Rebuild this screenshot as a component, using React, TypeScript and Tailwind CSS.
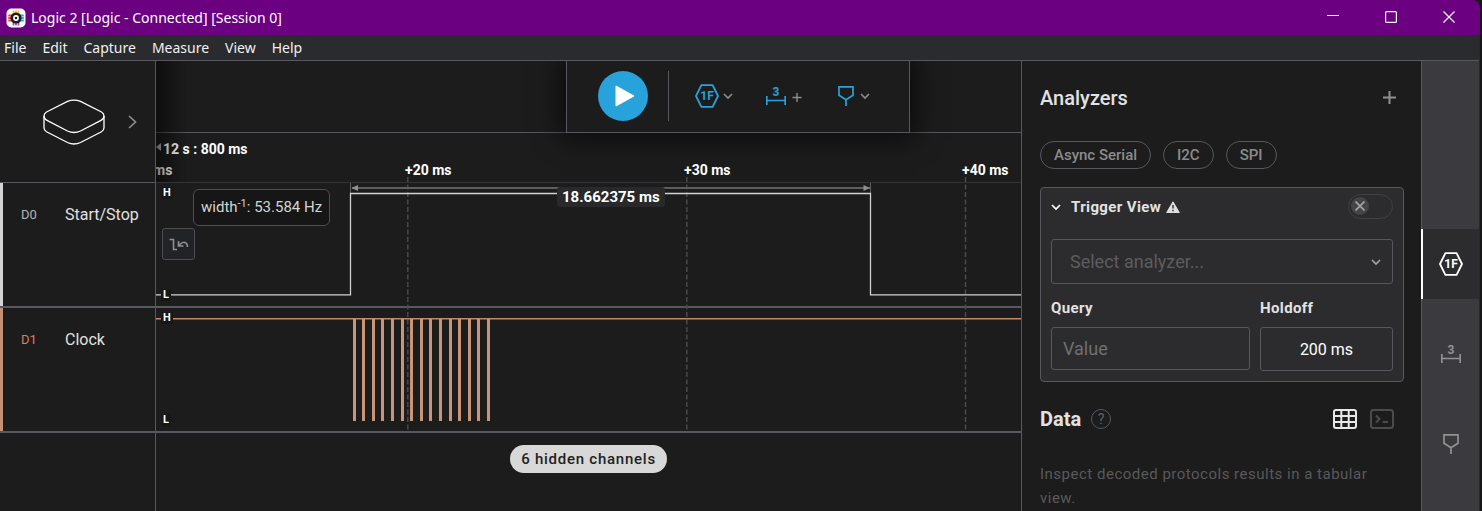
import React, { useState } from 'react';

const menus = ['File', 'Edit', 'Capture', 'Measure', 'View', 'Help'];
const clockPulses = [197, 206, 216, 225, 235, 245, 254, 264, 273, 283, 293, 302, 312, 321, 331];

function Logo() {
  return (
    <svg width="20" height="20" viewBox="0 0 20 20" aria-hidden="true">
      <rect x="0.5" y="0.5" width="19" height="19" rx="5" fill="#fff" />
      <path d="M7.5 2.5v4M12.5 2.5v4M10 2.5v3" stroke="#f5b921" strokeWidth="1.8" />
      <path d="M7.5 13.5v4M10 14.5v3M12.5 13.5v4" stroke="#a24bd0" strokeWidth="1.8" />
      <path d="M2.2 7.5h4M2.2 10h3M2.2 12.5h4" stroke="#e8503a" strokeWidth="1.8" />
      <path d="M13.8 7.5h4M14.8 10h3M13.8 12.5h4" stroke="#2aa8e0" strokeWidth="1.8" />
      <circle cx="10" cy="10" r="5.6" fill="#1d1d1f" />
      <circle cx="10" cy="10" r="2.1" fill="none" stroke="#fff" strokeWidth="1.6" />
    </svg>
  );
}

function HexIcon() {
  return (
    <svg width="24" height="24" viewBox="0 0 24 24" fill="none" aria-hidden="true">
      <path d="M6.4 1.2H17.6L23 12L17.6 22.8H6.4L1 12Z" stroke="currentColor" strokeWidth="1.8" strokeLinejoin="round" />
      <text x="12" y="16.4" textAnchor="middle" fill="currentColor" fontSize="12" fontWeight="700" fontFamily="Roboto, sans-serif">1F</text>
    </svg>
  );
}

function MeasureIcon() {
  return (
    <svg width="20" height="20" viewBox="0 0 20 20" fill="none" aria-hidden="true">
      <path d="M0.8 10v9M19.2 10v9M0.8 14.5H19.2" stroke="currentColor" strokeWidth="1.7" />
      <text x="10" y="10" textAnchor="middle" fill="currentColor" fontSize="12" fontWeight="700" fontFamily="Roboto, sans-serif">3</text>
    </svg>
  );
}

function MarkerIcon() {
  return (
    <svg width="16" height="20" viewBox="0 0 16 20" fill="none" aria-hidden="true">
      <path d="M1 0.9H15V9.2L8 13.8L1 9.2ZM8 13.8V20" stroke="currentColor" strokeWidth="1.7" />
    </svg>
  );
}

function Chevron({ className = '' }: { className?: string }) {
  return (
    <svg width="10" height="7" viewBox="0 0 10 7" fill="none" className={className} aria-hidden="true">
      <path d="M1 1L5 5L9 1" stroke="currentColor" strokeWidth="1.7" />
    </svg>
  );
}

function TitleBar() {
  return (
    <header className="flex h-[35px] items-center rounded-tr-lg bg-[#6b0080] pr-0.5 pl-1.5 text-white">
      <Logo />
      <h1 className="ml-[5px] flex-1 font-['Noto_Sans',sans-serif] text-sm">Logic 2 [Logic - Connected] [Session 0]</h1>
      <button aria-label="Minimize" className="flex h-full w-[58px] items-center justify-center">
        <svg width="12" height="12" viewBox="0 0 12 12"><path d="M0 3.5H12" stroke="#fff" /></svg>
      </button>
      <button aria-label="Maximize" className="flex h-full w-[58px] items-center justify-center pb-0.5">
        <svg width="12" height="12" viewBox="0 0 12 12"><rect x="0.6" y="0.6" width="10.8" height="10.8" rx="1" fill="none" stroke="#fff" strokeWidth="1.2" /></svg>
      </button>
      <button aria-label="Close" className="flex h-full w-[58px] items-center justify-center pb-0.5">
        <svg width="12" height="12" viewBox="0 0 12 12"><path d="M0.5 0.5L11.5 11.5M11.5 0.5L0.5 11.5" stroke="#fff" strokeWidth="1.2" /></svg>
      </button>
    </header>
  );
}

function ChannelLabel({ id, name, tone, bar }: { id: string; name: string; tone: string; bar: string }) {
  return (
    <div className="flex h-[125px] border-b-2 border-[#57575d]">
      <div className={`w-[3px] ${bar}`} />
      <div className="flex h-16 items-center pl-[18px]">
        <span className={`w-11 text-[13px] ${tone}`}>{id}</span>
        <span className="text-base text-[#e0e0e0]">{name}</span>
      </div>
    </div>
  );
}

function Sidebar() {
  return (
    <aside className="w-[156px] shrink-0 border-r border-[#57575d]">
      <div className="flex h-[122px] items-center border-b border-[#57575d] pl-[43px]">
        <svg width="62" height="48" viewBox="0 0 62 48" fill="none" stroke="#fff" strokeWidth="1.3" aria-hidden="true">
          <path d="M3.5 14L24.5 3.3Q31 0.8 37.5 3.3L58.5 14Q61 15.5 61 18Q61 20.8 58 22.3L37.5 33Q31 36 24.5 33L4 22.3Q1 20.8 1 18Q1 15.5 3.5 14Z" />
          <path d="M1 18V29.8Q1 32.2 3.5 33.8L24.5 44.5Q31 47.5 37.5 44.5L58.5 33.8Q61 32.2 61 29.8V18" />
        </svg>
        <button aria-label="Device settings" className="ml-[23px] text-[#8c8c8c]">
          <svg width="9" height="14" viewBox="0 0 9 14" fill="none"><path d="M1 1L7.5 7L1 13" stroke="currentColor" strokeWidth="1.7" /></svg>
        </button>
      </div>
      <ChannelLabel id="D0" name="Start/Stop" tone="text-[#b5b5b5]" bar="bg-[#d4d4d4]" />
      <ChannelLabel id="D1" name="Clock" tone="text-[#dd7c5e]" bar="bg-[#c69076]" />
    </aside>
  );
}

function Toolbar() {
  return (
    <div className="absolute left-[410px] top-0 z-10 flex h-[72px] w-[344px] items-center border-x border-b border-[#57575d] bg-[#1c1c1c] pb-px pl-[31px] shadow-[0_0_24px_6px_rgba(0,0,0,0.6)]">
      <button aria-label="Start capture" className="flex h-[50px] w-[50px] items-center justify-center rounded-full bg-[#27a2da]">
        <svg width="20" height="22" viewBox="0 0 20 22" className="ml-[3px]"><path d="M1 1L19 11L1 21Z" fill="#fff" stroke="#fff" strokeLinejoin="round" /></svg>
      </button>
      <div className="ml-5 h-[50px] w-px bg-[#57575d]" />
      <button aria-label="Add analyzer" className="ml-[26px] flex items-center gap-1 text-[#27a2da]">
        <HexIcon /><Chevron className="text-[#8c8c8c]" />
      </button>
      <button aria-label="Add measurement" className="ml-[33px] flex items-center gap-1.5 text-[#27a2da]">
        <MeasureIcon />
        <svg width="10" height="10" viewBox="0 0 10 10" className="mt-0.5 text-[#8c8c8c]"><path d="M5 1V10M0.5 5.5H9.5" stroke="currentColor" strokeWidth="1.4" /></svg>
      </button>
      <button aria-label="Add marker" className="ml-9 flex items-center gap-1.5 text-[#27a2da]">
        <MarkerIcon /><Chevron className="text-[#8c8c8c]" />
      </button>
    </div>
  );
}

function Level({ children, className }: { children: string; className: string }) {
  return <span className={`absolute left-[5px] bg-[#171717] px-0.5 text-[11px] leading-3 font-bold text-white ${className}`}>{children}</span>;
}

function Waveforms() {
  const tick = 'absolute top-7 text-sm leading-[18px] font-bold text-white';
  return (
    <div className="relative">
      <div className="h-[50px] border-b border-[#333336]" />
      <div className="h-[125px] border-b-2 border-[#57575d]" />
      <div className="h-[125px] border-b-2 border-[#57575d]" />
      <svg className="absolute inset-0 h-full w-full" aria-hidden="true">
        <g stroke="#4a4a4d" strokeWidth="1.5" strokeDasharray="5 2.5">
          <path d="M251.8 44V299" /><path d="M530.8 44V299" /><path d="M809.5 44V299" />
        </g>
        <g stroke="#5e5e5e" fill="none">
          <path d="M194.5 50V61M714.5 50V61" />
          <path d="M196 55H714" strokeWidth="2" />
        </g>
        <path d="M195.5 55L202 52V58ZM714 55L707.5 52V58Z" fill="#8f8f8f" />
        <path d="M0 161.8H194.5V60.5H714.5V161.8H1600" fill="none" stroke="#d2d2d2" strokeWidth="1.3" />
        <path d="M0 185.7H1600" stroke="#c08a6e" strokeWidth="1.5" />
        {clockPulses.map((x) => <rect key={x} x={x} y="186" width="3" height="102" fill="#c99579" />)}
      </svg>
      <span className="absolute top-2.5 left-0 h-0 w-0 border-y-4 border-r-[5px] border-y-transparent border-r-[#bbb]" />
      <span className="absolute top-[7px] left-[7px] text-sm leading-[18px] font-bold text-white">12 s : 800 ms</span>
      <span className={`${tick} left-[-3px]`}>ms</span>
      <span className={`${tick} left-[249px]`}>+20 ms</span>
      <span className={`${tick} left-[528px]`}>+30 ms</span>
      <span className={`${tick} left-[806px]`}>+40 ms</span>
      <Level className="top-[54px]">H</Level>
      <Level className="top-[156px]">L</Level>
      <Level className="top-[179px]">H</Level>
      <Level className="top-[281px]">L</Level>
      <div className="absolute top-14 left-[37px] flex h-[37px] items-center rounded-md border border-[#4d4d52] bg-[#161616] px-[7px] text-[15px] whitespace-nowrap text-[#d4d4d4]">
        <span>width<sup className="text-[11px]">-1</sup>: 53.584 Hz</span>
      </div>
      <button aria-label="Glitch filter" className="absolute top-[95px] left-[6px] flex h-8 w-[33px] items-center justify-center rounded-[3px] border border-[#4d4d52] bg-[#222326]">
        <svg width="20" height="13" viewBox="0 0 20 13" fill="none" stroke="#8f8f8f" strokeWidth="1.6">
          <path d="M0.5 1.5H4.5V11.5H8" /><path d="M9.5 3V8H14.5M10 7.5Q13 3.5 16 4.5Q18.5 5.5 18.5 9" />
        </svg>
      </button>
      <span className="absolute top-[54px] left-[401px] rounded-[3px] bg-[#29292b] px-[5px] text-[15px] leading-5 font-bold text-white">18.662375 ms</span>
    </div>
  );
}

function Capture() {
  return (
    <main className="relative min-w-0 flex-1 overflow-hidden">
      <div className="h-[72px] border-b border-[#57575d]" />
      <Toolbar />
      <Waveforms />
      <div className="absolute top-0 left-0 h-[121px] w-8 bg-gradient-to-r from-black/50 to-transparent" />
      <div className="flex justify-center pt-3">
        <button className="h-7 rounded-full bg-[#d8d8d8] px-[11px] text-[15px] font-medium tracking-wider text-[#222]">6 hidden channels</button>
      </div>
    </main>
  );
}

function AnalyzerCard() {
  const [enabled, setEnabled] = useState(false);
  return (
    <section className="mt-[18px] rounded border border-[#57575d] bg-[#2c2c2e] px-2.5 pb-2.5">
      <div className="flex h-[38px] items-center">
        <Chevron className="mr-2.5 text-white" />
        <h3 className="text-[15px] font-bold tracking-wide text-[#e2e2e2]">Trigger View</h3>
        <svg width="14" height="12" viewBox="0 0 14 12" className="ml-[5px]" aria-hidden="true">
          <path d="M7 0.8L13.3 11.5H0.7Z" fill="#dedede" stroke="#dedede" strokeLinejoin="round" />
          <path d="M7 4V7.5M7 8.8V10.3" stroke="#2c2c2e" strokeWidth="1.4" />
        </svg>
        <label className="mb-0.5 ml-auto flex h-[25px] w-[45px] items-center rounded-full border border-[#414144] px-0.5">
          <input type="checkbox" aria-label="Enable trigger view" className="sr-only" checked={enabled} onChange={(e) => setEnabled(e.target.checked)} />
          <span className="flex h-[18px] w-[18px] items-center justify-center rounded-full bg-[#454545]">
            <svg width="10" height="10" viewBox="0 0 10 10" aria-hidden="true"><path d="M0.5 0.5L9.5 9.5M9.5 0.5L0.5 9.5" stroke="#a5a5a5" strokeWidth="1.6" /></svg>
          </span>
        </label>
      </div>
      <div className="relative mt-[13px]">
        <select aria-label="Analyzer" defaultValue="" className="h-[45px] w-full appearance-none rounded-[3px] border border-[#57575d] bg-transparent px-[18px] text-lg text-[#5c5c5e]">
          <option value="">Select analyzer...</option>
        </select>
        <Chevron className="pointer-events-none absolute top-5 right-3 text-[#a5a5a5]" />
      </div>
      <div className="mt-3 flex gap-2.5">
        <div className="min-w-0 flex-1">
          <label htmlFor="query" className="block h-[31px] text-[15px] leading-6 font-bold tracking-wide text-[#e2e2e2]">Query</label>
          <input id="query" placeholder="Value" className="h-[43px] w-full rounded-[3px] border border-[#57575d] bg-transparent px-[11px] text-lg placeholder:text-[#707070]" />
        </div>
        <div className="w-[133px]">
          <label htmlFor="holdoff" className="block h-[31px] text-[15px] leading-6 font-bold tracking-wide text-[#e2e2e2]">Holdoff</label>
          <input id="holdoff" defaultValue="200 ms" className="h-11 w-full rounded-[3px] border border-[#57575d] bg-transparent text-center text-base text-white" />
        </div>
      </div>
    </section>
  );
}

function Panel() {
  return (
    <section className="w-[400px] shrink-0 overflow-hidden border-l border-[#57575d] pr-[17px] pl-[18px]">
      <div className="flex h-20 items-center justify-between pr-2">
        <h2 className="pb-[7px] text-xl font-medium text-[#e2e2e2]">Analyzers</h2>
        <button aria-label="Add analyzer" className="pb-[7px] text-[#909090]">
          <svg width="13" height="13" viewBox="0 0 13 13"><path d="M6.5 0V13M0 6.5H13" stroke="currentColor" strokeWidth="2" /></svg>
        </button>
      </div>
      <div className="flex gap-3">
        {['Async Serial', 'I2C', 'SPI'].map((n) => (
          <button key={n} className="h-7 rounded-full border border-[#57575d] px-[13px] text-[15px] font-medium text-[#8b8b8b]">{n}</button>
        ))}
      </div>
      <AnalyzerCard />
      <div className="mt-[22px] flex h-[30px] items-center pr-2.5">
        <h2 className="text-xl font-bold text-[#e2e2e2]">Data</h2>
        <button aria-label="Help" className="ml-2.5 h-5 w-5 rounded-full border border-[#57575d] text-sm leading-[18px] text-[#626266]">?</button>
        <button aria-label="Table view" className="ml-auto">
          <svg width="24" height="20" viewBox="0 0 24 20" fill="none" stroke="#e8e8e8" strokeWidth="2">
            <rect x="1" y="1" width="22" height="18" rx="2" /><path d="M1 7H23M1 13H23M8.3 1V19M15.7 1V19" />
          </svg>
        </button>
        <button aria-label="Terminal view" className="ml-[13px]">
          <svg width="24" height="20" viewBox="0 0 24 20" fill="none" stroke="#4b4b4e" strokeWidth="2">
            <rect x="1" y="1" width="22" height="18" rx="2.5" /><path d="M6 6.5L9.5 10L6 13.5M12.5 13H18" />
          </svg>
        </button>
      </div>
      <p className="mt-7 pr-6 text-[15px] leading-6 tracking-[0.5px] text-[#59595b]">Inspect decoded protocols results in a tabular view.</p>
    </section>
  );
}

function Rail() {
  const item = 'flex h-[70px] w-full items-center justify-center';
  return (
    <nav className="flex w-[58px] shrink-0 flex-col gap-5 border-l border-[#57575d] bg-[#3b3a3e] pt-[168px] text-[#929292]">
      <button aria-label="Analyzers" className={`${item} relative bg-[#2c2c2e] text-white before:absolute before:inset-y-0 before:-left-px before:w-0.5 before:bg-white`}><HexIcon /></button>
      <button aria-label="Measurements" className={item}><MeasureIcon /></button>
      <button aria-label="Markers" className={item}><MarkerIcon /></button>
    </nav>
  );
}

export default function App() {
  return (
    <div className="flex h-screen bg-[#1a1a1a] font-[Roboto,sans-serif]">
      <div className="flex min-w-0 flex-1 flex-col">
        <TitleBar />
        <div className="flex min-h-0 flex-1 flex-col border-r border-[#5c0070] bg-[#1c1c1c]">
          <nav className="flex h-[26px] shrink-0 items-center gap-4 border-b border-[#57575d] bg-[#2a2b2e] pl-1 font-['Noto_Sans',sans-serif] text-sm text-[#f0f0f0]">
            {menus.map((m) => <button key={m}>{m}</button>)}
          </nav>
          <div className="flex min-h-0 flex-1">
            <Sidebar />
            <Capture />
            <Panel />
            <Rail />
          </div>
        </div>
      </div>
      <div className="w-0.5 bg-[#161616]" />
    </div>
  );
}
